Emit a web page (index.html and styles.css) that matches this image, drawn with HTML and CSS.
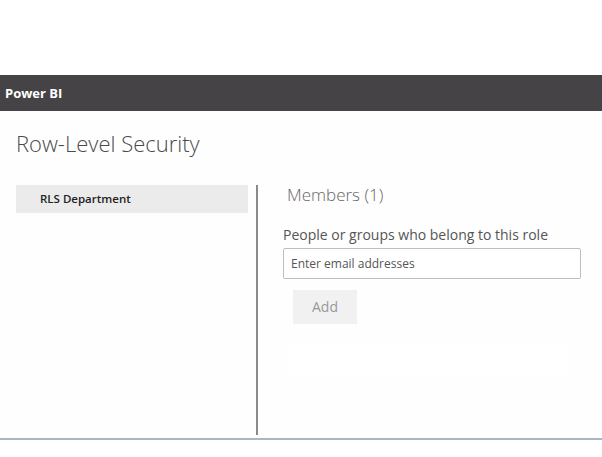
FILE: index.html
```html
<!DOCTYPE html>
<html>
<head>
<title>Row-Level Security</title>
<meta http-equiv="Content-Type" content="text/html; charset=utf-8" />
<link rel="stylesheet" href="styles.css">
</head>
<body>
<div class="topgap"></div>
<div class="appbar">Power BI</div>
<div class="dialog">
	<div class="title">Row-Level Security</div>
	<div class="content">
		<div class="roles">
			<div class="role">RLS Department</div>
		</div>
		<div class="divider"></div>
		<div class="members">
			<div class="members-head">Members (1)</div>
			<div class="label">People or groups who belong to this role</div>
			<input class="email" type="text" placeholder="Enter email addresses">
			<div class="but">Add</div>
			<div class="list"></div>
		</div>
	</div>
</div>
<div class="bottomline"></div>
</body>
</html>
```

FILE: styles.css
```css
body {
	margin: 0;
	background-color: #ffffff;
	font-family: "Open Sans", "Noto Sans", sans-serif;
}
.topgap {
	height: 75px;
}
.appbar {
	height: 36px;
	line-height: 36px;
	background-color: #454345;
	color: #ffffff;
	font-weight: bold;
	font-size: 13px;
	padding-left: 5px;
}
.dialog {
	background-color: #fefefe;
	height: 327px;
}
.title {
	font-size: 22px;
	font-weight: 300;
	color: #4a4a4a;
	padding: 17px 0 0 16px;
	height: 57px;
}
.content {
	display: flex;
}
.roles {
	width: 232px;
	margin-left: 16px;
}
.role {
	background-color: #ebebeb;
	height: 28px;
	line-height: 28px;
	padding-left: 24px;
	font-size: 11.5px;
	font-weight: 600;
	color: #222222;
}
.divider {
	width: 2px;
	height: 250px;
	margin-left: 8px;
	background-color: #8a8a8a;
}
.members {
	margin-left: 25px;
	width: 298px;
}
.members-head {
	font-size: 17px;
	font-weight: 300;
	color: #666666;
	padding-left: 4px;
	margin-top: -2px;
	height: 42px;
}
.label {
	font-size: 14px;
	line-height: 20px;
	color: #555555;
	height: 23px;
}
.email {
	box-sizing: border-box;
	display: block;
	width: 298px;
	height: 31px;
	border: solid #bdbdbd 1px;
	border-radius: 2px;
	padding: 0 7px;
	font-family: "Open Sans", "Noto Sans", sans-serif;
	font-size: 12px;
	color: #555555;
	background-color: #ffffff;
}
.email::placeholder {
	color: #555555;
}
.but {
	margin: 11px 0 0 10px;
	width: 64px;
	height: 34px;
	line-height: 34px;
	text-align: center;
	background-color: #f1f1f1;
	color: #999999;
	font-size: 14px;
}
.list {
	margin: 22px 0 0 6px;
	height: 32px;
	width: 280px;
	background-color: #ffffff;
}
.bottomline {
	height: 2px;
	background-color: #aab6c6;
}
```
